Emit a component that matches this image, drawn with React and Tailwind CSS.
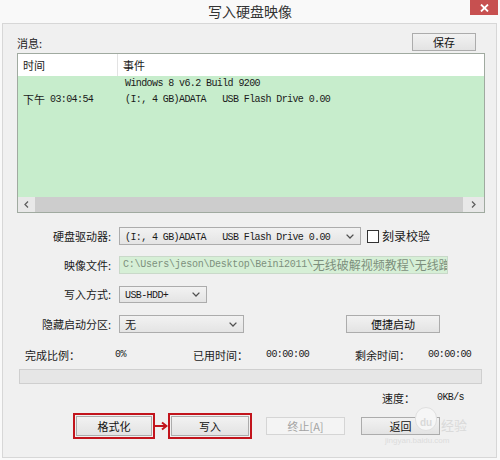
import React from "react";

function Chevron() {
  return (
    <svg width="8" height="5" viewBox="0 0 8 5" className="shrink-0">
      <path d="M0.6 0.6L4 4L7.4 0.6" fill="none" stroke="#505050" strokeWidth="1.3" />
    </svg>
  );
}

function Combo({ className, children }) {
  return (
    <div className={`${className} flex items-center border border-[#acacac] bg-linear-to-b from-[#f2f2f2] to-[#e4e4e4] pl-[5px] pr-[6px]`}>
      <div className="flex-1 overflow-hidden whitespace-nowrap leading-[15px]">{children}</div>
      <Chevron />
    </div>
  );
}

function Btn({ className, children, disabled }) {
  return (
    <div
      className={`${className} flex items-center justify-center border text-[11px] leading-none ${
        disabled
          ? "border-[#d5d5d5] bg-[#f4f4f4] text-[#a3a3a3]"
          : "border-[#acacac] bg-linear-to-b from-[#f2f2f2] to-[#e3e3e3] text-[#111]"
      }`}
    >
      {children}
    </div>
  );
}

export default function App() {
  return (
    <div className="w-[500px] h-[460px] bg-[#f9f9f9] flex flex-col font-['Noto_Sans_CJK_SC',sans-serif] text-[#1a1a1a] overflow-hidden">
      {/* title bar */}
      <div className="h-[23px] flex items-start shrink-0">
        <div className="w-[30px]" />
        <div className="flex-1 text-center text-[14px] leading-[22px] text-[#333]">写入硬盘映像</div>
        <div className="w-[28px] h-[15px] mr-[2px] bg-[#c75050] flex items-center justify-center">
          <svg width="9" height="8" viewBox="0 0 9 8">
            <path d="M1 0.5L8 7.5M8 0.5L1 7.5" stroke="#fff" strokeWidth="1.8" />
          </svg>
        </div>
      </div>

      {/* client */}
      <div className="relative ml-[2px] mr-[3px] h-[435px] border border-[#d7d7d7] bg-[#f0f0f0] flex flex-col pl-[14px] pr-[11px] text-[11px]">
        {/* message label row */}
        <div className="mt-[9px] h-[18px] flex items-end justify-between">
          <div className="leading-[15px]">消息:</div>
          <Btn className="w-[64px] h-[18px] mr-[9px]">保存</Btn>
        </div>

        {/* list */}
        <div className="mt-[2px] h-[160px] border border-[#a0aaa0] flex flex-col bg-white">
          <div className="h-[22px] flex bg-white shrink-0">
            <div className="w-[100px] pl-[5px] flex items-center border-r border-[#e3e3e3]">时间</div>
            <div className="flex-1 pl-[5px] flex items-center">事件</div>
          </div>
          <div className="flex-1 bg-[#c7edcc] flex flex-col">
            <div className="flex h-[46px]">
              <div className="w-[100px] pl-[5px] flex items-center">
                <span>下午</span>
                <span className="ml-[5px] font-['Liberation_Mono',monospace] text-[10px] tracking-[-0.6px]">03:04:54</span>
              </div>
              <div className="flex-1 pl-[7px] font-['Liberation_Mono',monospace] text-[10px] tracking-[-0.6px] leading-[16px] whitespace-pre">
                {"Windows 8 v6.2 Build 9200\n(I:, 4 GB)ADATA   USB Flash Drive 0.00\n"}
              </div>
            </div>
          </div>
          <div className="h-[15px] flex bg-[#e8e8e8] shrink-0">
            <div className="w-[17px] flex items-center justify-center">
              <svg width="5" height="7" viewBox="0 0 5 7"><path d="M4 0.5L1 3.5L4 6.5" fill="none" stroke="#606060" strokeWidth="1.3" /></svg>
            </div>
            <div className="w-[428px] bg-[#cdcdcd]" />
            <div className="flex-1 flex items-center justify-center">
              <svg width="5" height="7" viewBox="0 0 5 7"><path d="M1 0.5L4 3.5L1 6.5" fill="none" stroke="#606060" strokeWidth="1.3" /></svg>
            </div>
          </div>
        </div>

        {/* drive row */}
        <div className="mt-[14px] h-[18px] flex items-center">
          <div className="w-[96px] text-right pr-[2px]">硬盘驱动器:</div>
          <Combo className="ml-[6px] w-[242px] h-[18px]">
            <span className="font-['Liberation_Mono',monospace] text-[10px] tracking-[-0.6px] whitespace-pre">{"(I:, 4 GB)ADATA   USB Flash Drive 0.00"}</span>
          </Combo>
          <div className="ml-[6px] w-[12px] h-[13px] border border-[#333] bg-white" />
          <div className="ml-[3px] text-[12px]">刻录校验</div>
        </div>

        {/* image file row */}
        <div className="mt-[11px] h-[18px] flex items-center">
          <div className="w-[96px] text-right pr-[2px]">映像文件:</div>
          <div className="ml-[6px] w-[329px] h-[18px] border border-[#c9d9c9] bg-[#d6efd6] flex items-center pl-[3px] overflow-hidden whitespace-nowrap text-[#7d8f7d] leading-[16px]">
            <span className="font-['Liberation_Mono',monospace] text-[10px] tracking-[-0.25px]">{"C:\\Users\\jeson\\Desktop\\Beini2011\\"}</span>
            <span className="text-[12px]">无线破解视频教程</span>
            <span className="font-['Liberation_Mono',monospace] text-[10px]">\</span>
            <span className="text-[12px]">无线蹭网值</span>
          </div>
        </div>

        {/* write mode */}
        <div className="mt-[12px] h-[17px] flex items-center">
          <div className="w-[96px] text-right pr-[2px]">写入方式:</div>
          <Combo className="ml-[6px] w-[88px] h-[17px]">
            <span className="font-['Liberation_Mono',monospace] text-[10px] tracking-[-0.6px]">USB-HDD+</span>
          </Combo>
        </div>

        {/* hidden partition */}
        <div className="mt-[12px] h-[18px] flex items-center">
          <div className="w-[96px] text-right pr-[2px]">隐藏启动分区:</div>
          <Combo className="ml-[6px] w-[125px] h-[18px]">
            <span className="text-[11px]">无</span>
          </Combo>
          <Btn className="ml-[102px] w-[94px] h-[18px]">便捷启动</Btn>
        </div>

        {/* stats */}
        <div className="mt-[15px] h-[14px] pl-[8px] grid grid-cols-[90px_78px_73px_89px_73px_auto] items-center leading-none">
          <div>完成比例：</div>
          <div className="font-['Liberation_Mono',monospace] text-[10px] tracking-[-0.6px]">0%</div>
          <div>已用时间：</div>
          <div className="font-['Liberation_Mono',monospace] text-[10px] tracking-[-0.6px]">00:00:00</div>
          <div>剩余时间：</div>
          <div className="font-['Liberation_Mono',monospace] text-[10px] tracking-[-0.6px]">00:00:00</div>
        </div>

        {/* progress */}
        <div className="mt-[7px] ml-[2px] mr-[3px] h-[15px] border border-[#cfcfcf] bg-[#e6e6e6]" />

        {/* speed */}
        <div className="mt-[7px] h-[14px] pl-[365px] flex items-center leading-none">
          <div className="w-[55px]">速度：</div>
          <div className="font-['Liberation_Mono',monospace] text-[10px] tracking-[-0.6px]">0KB/s</div>
        </div>

        {/* buttons */}
        <div className="mt-[8px] h-[26px] pl-[56px] flex items-center">
          <div className="w-[82px] h-[26px] border-2 border-[#c2141c] p-[1px]">
            <Btn className="w-full h-full">格式化</Btn>
          </div>
          <svg width="13" height="10" viewBox="0 0 13 10" className="shrink-0">
            <path d="M0 5H11" stroke="#c2141c" strokeWidth="2" />
            <path d="M7 1.5L11.5 5L7 8.5" fill="none" stroke="#c2141c" strokeWidth="2" />
          </svg>
          <div className="w-[84px] h-[26px] border-2 border-[#c2141c] p-[1px]">
            <Btn className="w-full h-full">写入</Btn>
          </div>
          <Btn disabled className="ml-[14px] w-[79px] h-[18px]">终止[A]</Btn>
          <Btn className="ml-[16px] w-[79px] h-[18px]">返回</Btn>
        </div>

        {/* watermark overlay */}
        <div className="absolute left-[412px] top-[383px] w-[22px] h-[24px] rounded-full bg-[#f6f6f6] border border-[#e0e0e0] flex items-end justify-center pb-[2px] text-[10px] font-bold leading-none text-[#d9d9d9] font-['Liberation_Sans',sans-serif] pointer-events-none">du</div>
        <div className="absolute left-[438px] top-[394px] text-[13px] leading-none text-[#dadada] pointer-events-none">经验</div>
        <div className="absolute left-[382px] top-[413px] text-[8px] leading-none text-[#dcdcdc] font-['Liberation_Sans',sans-serif] pointer-events-none">jingyan.baidu.com</div>
      </div>
    </div>
  );
}
